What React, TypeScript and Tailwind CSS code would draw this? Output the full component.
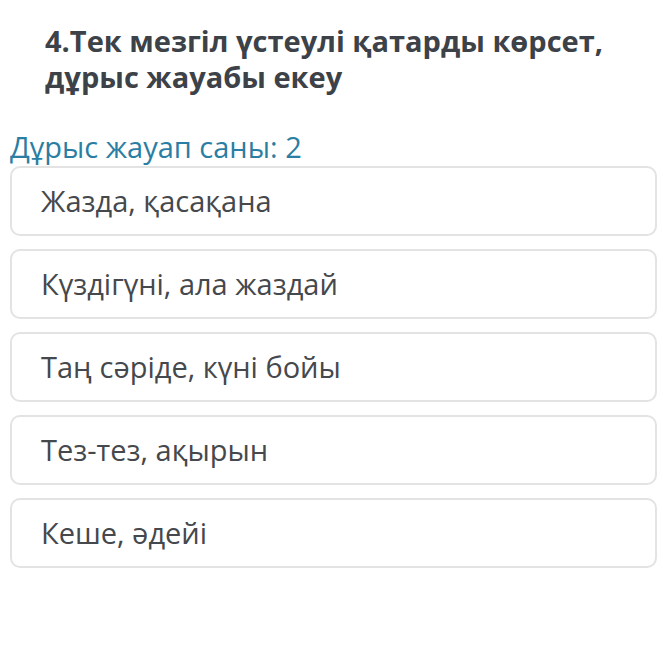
const options = [
  "Жазда, қасақана",
  "Күздігүні, ала жаздай",
  "Таң сәріде, күні бойы",
  "Тез-тез, ақырын",
  "Кеше, әдейі",
];

export default function App() {
  return (
    <div
      className="min-h-[652px] w-[663px] bg-white pt-[23px]"
      style={{ fontFamily: '"Open Sans", "Noto Sans", sans-serif' }}
    >
      <h1 className="pl-[45px] pr-4 text-[29px] font-bold leading-[36px] text-[#3d4248]">
        4.Тек мезгіл үстеулі қатарды көрсет,
        <br />
        дұрыс жауабы екеу
      </h1>
      <p className="mt-[35px] pl-[10px] text-[29px] leading-[34px] text-[#2b7ea3]">
        Дұрыс жауап саны: 2
      </p>
      <div className="mt-[2px] flex flex-col gap-[13px] pl-[10px] pr-[6px]">
        {options.map((o) => (
          <div
            key={o}
            className="flex h-[70px] items-center rounded-[10px] border-2 border-[#e3e3e3] pl-[29px] text-[29px] text-[#45484c]"
          >
            {o}
          </div>
        ))}
      </div>
    </div>
  );
}
